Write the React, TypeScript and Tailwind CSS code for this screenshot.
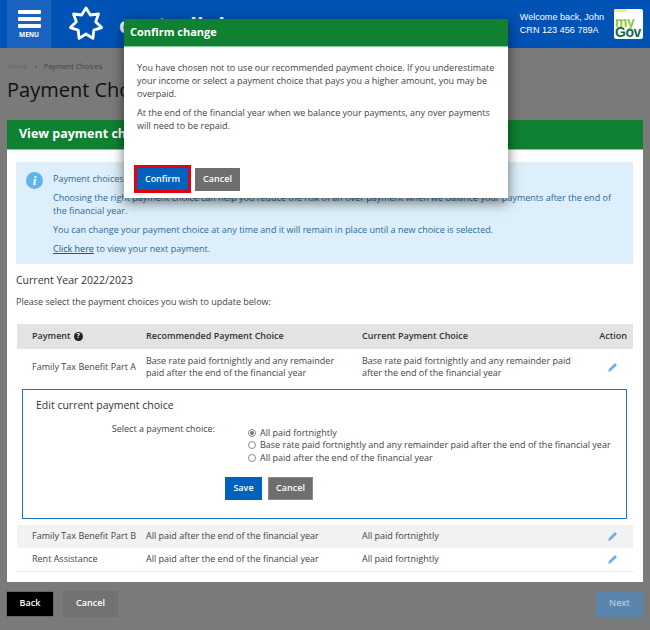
import { Pencil } from 'lucide-react';

const star = (() => {
  const pts: string[] = [];
  for (let i = 0; i < 14; i++) {
    const r = i % 2 === 0 ? 16 : 10;
    const a = (i * Math.PI) / 7 - Math.PI / 2;
    pts.push(`${(18 + r * Math.cos(a)).toFixed(1)},${(18 + r * Math.sin(a)).toFixed(1)}`);
  }
  return pts.join(' ');
})();

const rows = [
  { name: 'Family Tax Benefit Part B', rec: 'All paid after the end of the financial year', cur: 'All paid fortnightly', bg: 'bg-[#f2f2f2]' },
  { name: 'Rent Assistance', rec: 'All paid after the end of the financial year', cur: 'All paid fortnightly', bg: 'bg-white' },
];

const gridCols = 'grid grid-cols-[114px_216px_1fr_42px]';

function Edit() {
  return (
    <div className="flex justify-center">
      <Pencil size={9} fill="#6fa8e6" stroke="#6fa8e6" />
    </div>
  );
}

function Radio({ checked, label }: { checked?: boolean; label: string }) {
  return (
    <div className="flex h-[12.5px] items-center gap-[4px]">
      <span className="flex h-[8px] w-[8px] items-center justify-center rounded-full border border-[#8a8a8a] bg-white">
        {checked && <span className="h-[4px] w-[4px] rounded-full bg-[#777]" />}
      </span>
      <span>{label}</span>
    </div>
  );
}

export default function App() {
  return (
    <div className="relative h-[630px] w-[650px] overflow-hidden bg-[#7a7a7a] font-['Open_Sans',sans-serif] text-[9px] leading-[12.5px] text-[#444]">
      <header className="flex h-[48px] items-stretch bg-[#0052b4]">
        <div className="ml-[7px] flex w-[44px] flex-col items-center bg-[#1a64c0] pt-[10px]">
          <div className="flex flex-col gap-[3px]">
            <div className="h-[4px] w-[23px] rounded-[1px] bg-white" />
            <div className="h-[4px] w-[23px] rounded-[1px] bg-white" />
            <div className="h-[4px] w-[23px] rounded-[1px] bg-white" />
          </div>
          <span className="mt-[3px] text-[6.5px] leading-[8px] font-bold text-white">MENU</span>
        </div>
        <svg className="mt-[6px] ml-[17px]" width="36" height="36" viewBox="0 0 36 36">
          <polygon points={star} fill="none" stroke="white" strokeWidth="2.8" strokeLinejoin="round" />
        </svg>
        <span className="mt-[11px] ml-[15px] text-[22px] leading-[26px] font-bold text-white">centrelink</span>
        <div className="mt-[11px] ml-auto font-['Liberation_Sans',sans-serif] text-[9.1px] leading-[13px] text-white">
          <div>Welcome back, John</div>
          <div>CRN 123 456 789A</div>
        </div>
        <div className="relative mt-[9px] mr-[7px] ml-[10px] h-[30px] w-[29px] overflow-hidden rounded-[2px] bg-white pt-[8px] pl-[1px] font-['Liberation_Sans',sans-serif] text-[14px] leading-[10px] font-bold tracking-[-0.5px]">
          <div className="absolute top-0 left-0 h-[3px] w-[13px] bg-[#f3ec78]" />
          <div className="text-[#8dc63f]">my</div>
          <div className="text-[#0c6b4f]">Gov</div>
        </div>
      </header>

      <main className="px-[7px]">
        <div className="mt-[5px] flex h-[26px] items-center gap-[7px] text-[7.3px] text-[#444]">
          <span className="text-[#666]">Home</span>
          <span>›</span>
          <span>Payment Choices</span>
        </div>
        <h1 className="h-[41px] text-[20px] leading-[21px] text-[#111]">Payment Choices</h1>

        <section className="bg-white">
          <div className="flex h-[30px] items-center border-b border-[#8fc79f] bg-[#108033] pl-[12px] text-[12.5px] font-bold text-white">
            View payment choices
          </div>
          <div className="pt-[12px] pr-[10px] pl-[9px]">
            <div className="flex h-[102px] bg-[#ddeffa] pt-[10px] leading-[13px] text-[#2c6a99]">
              <div className="ml-[10px] flex h-[17px] w-[17px] items-center justify-center rounded-full bg-[#5fb4ea] font-['Liberation_Serif',serif] text-[13px] font-bold text-white italic">
                i
              </div>
              <div className="ml-[10px] flex-1">
                <p>Payment choices</p>
                <p className="mt-[6px] pr-[16px]">
                  Choosing the right payment choice can help you reduce the risk of an over payment when we balance your payments after the end of the financial year.
                </p>
                <p className="mt-[6px]">You can change your payment choice at any time and it will remain in place until a new choice is selected.</p>
                <p className="mt-[6px]">
                  <span className="text-[#145a96] underline">Click here</span> to view your next payment.
                </p>
              </div>
            </div>

            <h2 className="mt-[9px] text-[10.5px] leading-[14px] text-[#333]">Current Year 2022/2023</h2>
            <p className="mt-[9px]">Please select the payment choices you wish to update below:</p>

            <div className="mt-[15px] ml-[1px] border-b border-[#e6e6e6]">
              <div className={`${gridCols} h-[25px] items-center bg-[#e3e3e3] pl-[15px] font-semibold text-[#333]`}>
                <div className="flex items-center gap-[3px]">
                  Payment
                  <span className="flex h-[9px] w-[9px] items-center justify-center rounded-full bg-[#222] text-[7px] font-bold text-white">?</span>
                </div>
                <div>Recommended Payment Choice</div>
                <div>Current Payment Choice</div>
                <div className="pr-[6px] text-right">Action</div>
              </div>
              <div className={`${gridCols} h-[40px] items-center pb-[3px] pl-[15px]`}>
                <div>Family Tax Benefit Part A</div>
                <div className="pr-[10px]">Base rate paid fortnightly and any remainder paid after the end of the financial year</div>
                <div className="pr-[4px]">Base rate paid fortnightly and any remainder paid after the end of the financial year</div>
                <Edit />
              </div>

              <div className="mr-[6px] ml-[5px] h-[130px] border border-[#1a75c4] pt-[8px] pl-[13px]">
                <h3 className="text-[10.5px] leading-[14px] text-[#333]">Edit current payment choice</h3>
                <div className="mt-[10px] flex">
                  <div className="w-[179px] pt-[1px] text-right">Select a payment choice:</div>
                  <div className="mt-[5px] ml-[33px]">
                    <Radio checked label="All paid fortnightly" />
                    <Radio label="Base rate paid fortnightly and any remainder paid after the end of the financial year" />
                    <Radio label="All paid after the end of the financial year" />
                  </div>
                </div>
                <div className="mt-[13px] ml-[189px] flex gap-[6px]">
                  <button className="h-[23px] w-[37px] bg-[#0062bd] font-semibold text-white">Save</button>
                  <button className="h-[23px] w-[45px] border border-[#8a8a8a] bg-[#6e6e6e] font-semibold text-white">Cancel</button>
                </div>
              </div>

              <div className="mt-[6px]">
                {rows.map((r) => (
                  <div key={r.name} className={`${gridCols} h-[23px] items-center pl-[15px] ${r.bg}`}>
                    <div className="whitespace-nowrap">{r.name}</div>
                    <div>{r.rec}</div>
                    <div>{r.cur}</div>
                    <Edit />
                  </div>
                ))}
              </div>
            </div>
            <div className="h-[10px]" />
          </div>
        </section>

        <div className="mt-[9px] -ml-[1px] flex items-center font-semibold text-white">
          <button className="h-[26px] w-[48px] border border-[#666] bg-black">Back</button>
          <button className="ml-[9px] h-[26px] w-[55px] bg-[#727272]">Cancel</button>
          <button className="ml-auto h-[26px] w-[47px] bg-[#5a86ae] text-[#b5c6d6]">Next</button>
        </div>
      </main>

      <div className="absolute top-[19px] left-[124px] h-[179px] w-[384px] bg-white shadow-[0_4px_12px_rgba(0,0,0,0.55)]">
        <div className="flex h-[28px] items-center border-b border-[#8fc79f] bg-[#108033] pl-[6px] text-[11px] font-bold text-white">Confirm change</div>
        <div className="px-[13px] pt-[14px] leading-[13px]">
          <p>You have chosen not to use our recommended payment choice. If you underestimate your income or select a payment choice that pays you a higher amount, you may be overpaid.</p>
          <p className="mt-[6px]">At the end of the financial year when we balance your payments, any over payments will need to be repaid.</p>
        </div>
        <div className="absolute top-[146px] left-[10px] flex items-center gap-[4px]">
          <div className="border-[3px] border-[#e3000f]">
            <button className="block h-[22px] w-[51px] bg-[#0062bd] font-semibold text-white">Confirm</button>
          </div>
          <button className="h-[23px] w-[45px] bg-[#6e6e6e] font-semibold text-white">Cancel</button>
        </div>
      </div>
    </div>
  );
}
